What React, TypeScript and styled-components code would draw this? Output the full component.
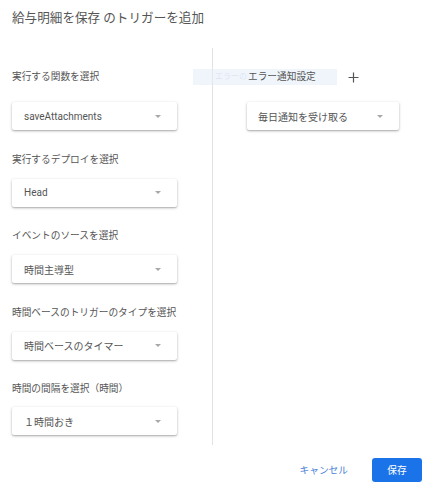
import React from "react";
import styled, { createGlobalStyle } from "styled-components";

const Global = createGlobalStyle`
  html, body { margin: 0; padding: 0; background: #ffffff; }
  body { font-family: Roboto, "Noto Sans CJK JP", "Noto Sans", sans-serif; }
  * { box-sizing: border-box; }
`;

const Dialog = styled.div`
  width: 437px;
  height: 500px;
  display: flex;
  flex-direction: column;
  background: #fff;
`;

const Title = styled.h1`
  margin: 0;
  height: 48px;
  padding: 0 0 12px 12px;
  font-size: 12.6px;
  line-height: 36px;
  font-weight: 400;
  color: #555555;
  letter-spacing: 0;
`;

const Body = styled.div`
  display: grid;
  grid-template-columns: 213px 1fr;
  height: 397px;
`;

const LeftColumn = styled.div`
  display: flex;
  flex-direction: column;
  gap: 22.5px;
  padding: 22px 0 0 12px;
  border-right: 1px solid #e2e2e2;
`;

const RightColumn = styled.div`
  position: relative;
  display: flex;
  flex-direction: column;
  padding: 22px 0 0 34px;
`;

const Field = styled.div`
  display: flex;
  flex-direction: column;
`;

const Label = styled.div<{ $gap: number }>`
  font-size: 9.7px;
  line-height: 14px;
  color: #555555;
  margin-bottom: ${(p) => p.$gap}px;
  white-space: nowrap;
`;

const HeaderRow = styled.div`
  position: relative;
  display: flex;
  align-items: center;
  height: 14px;
  margin-bottom: 18px;
  padding-left: 1px;
`;

const HeaderText = styled.span`
  font-size: 9.7px;
  line-height: 14px;
  color: #555555;
  white-space: nowrap;
`;

const PlusIcon = styled.svg`
  margin-left: 32px;
  width: 11px;
  height: 11px;
  flex: none;
`;

const GhostTip = styled.div`
  position: absolute;
  left: -20px;
  top: 21px;
  width: 144px;
  height: 16px;
  background: rgba(225, 236, 250, 0.5);
  font-size: 8px;
  line-height: 16px;
  padding-left: 22px;
  color: rgba(120, 140, 180, 0.18);
  pointer-events: none;
  white-space: nowrap;
  overflow: hidden;
`;

const Select = styled.div<{ $width: number; $pad: number }>`
  width: ${(p) => p.$width}px;
  height: 28px;
  display: flex;
  align-items: center;
  justify-content: space-between;
  padding: 0 16px 0 ${(p) => p.$pad}px;
  background: #fff;
  border-radius: 2px;
  box-shadow: 0 1px 3px rgba(0, 0, 0, 0.28), 0 1px 1px rgba(0, 0, 0, 0.1);
  font-size: 10px;
  color: #555555;
  white-space: nowrap;
`;

const Arrow = styled.span`
  width: 0;
  height: 0;
  border-left: 3.5px solid transparent;
  border-right: 3.5px solid transparent;
  border-top: 3.5px solid #a8a8a8;
  flex: none;
`;

const Footer = styled.div`
  flex: 1;
  display: flex;
  justify-content: flex-end;
  align-items: flex-start;
  padding: 13px 15px 0 0;
  gap: 24px;
`;

const TextButton = styled.button`
  border: 0;
  background: transparent;
  padding: 0;
  height: 24px;
  font-family: inherit;
  font-size: 9.7px;
  color: #4a7fd6;
  cursor: pointer;
`;

const PrimaryButton = styled.button`
  border: 0;
  width: 50px;
  height: 24px;
  border-radius: 3px;
  background: #1a73e8;
  color: #fff;
  font-family: inherit;
  font-size: 9.7px;
  cursor: pointer;
`;

const fields = [
  { label: "実行する関数を選択", value: "saveAttachments", gap: 18 },
  { label: "実行するデプロイを選択", value: "Head", gap: 12 },
  { label: "イベントのソースを選択", value: "時間主導型", gap: 12 },
  { label: "時間ベースのトリガーのタイプを選択", value: "時間ベースのタイマー", gap: 12 },
  { label: "時間の間隔を選択（時間）", value: "１時間おき", gap: 11 },
];

export default function App() {
  return (
    <>
      <Global />
      <Dialog>
        <Title>給与明細を保存 のトリガーを追加</Title>
        <Body>
          <LeftColumn>
            {fields.map((f) => (
              <Field key={f.label}>
                <Label $gap={f.gap}>{f.label}</Label>
                <Select $width={165} $pad={12}>
                  <span>{f.value}</span>
                  <Arrow />
                </Select>
              </Field>
            ))}
          </LeftColumn>
          <RightColumn>
            <GhostTip>エラーの</GhostTip>
            <HeaderRow>
              <HeaderText>エラー通知設定</HeaderText>
              <PlusIcon viewBox="0 0 11 11">
                <path d="M5.5 0.5v10M0.5 5.5h10" stroke="#555" strokeWidth="1.2" fill="none" />
              </PlusIcon>
            </HeaderRow>
            <Select $width={152} $pad={11}>
              <span>毎日通知を受け取る</span>
              <Arrow />
            </Select>
          </RightColumn>
        </Body>
        <Footer>
          <TextButton>キャンセル</TextButton>
          <PrimaryButton>保存</PrimaryButton>
        </Footer>
      </Dialog>
    </>
  );
}
